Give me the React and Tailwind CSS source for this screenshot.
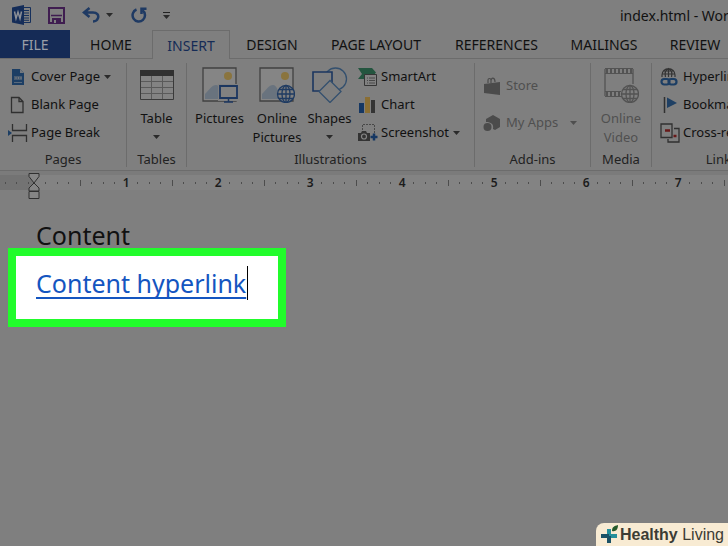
const tabs = [
  { name: 'HOME', width: 'w-[82px]' },
  { name: 'INSERT', width: 'w-[78px]', active: true },
  { name: 'DESIGN', width: 'w-[84px]' },
  { name: 'PAGE LAYOUT', width: 'w-[124px]' },
  { name: 'REFERENCES', width: 'w-[117px]' },
  { name: 'MAILINGS', width: 'w-[98px]' },
  { name: 'REVIEW', width: 'w-[84px]' },
];

const inches = [1, 2, 3, 4, 5, 6, 7, 8, 9, 10, 11, 12];

const Caret = ({ className = '' }) => (
  <svg className={`h-1 w-[7px] shrink-0 ${className}`} viewBox="0 0 7 4" fill="currentColor">
    <path d="M0 0h7L3.5 4z" />
  </svg>
);

const WordIcon = () => (
  <svg className="h-5 w-5" viewBox="0 0 20 20">
    <path d="M10 2.500h8.500v15H10z" fill="#7f7f7f" stroke="#16305c" />
    <path d="M11 5.500h6M11 8h6M11 10.500h6M11 13h6M11 15.300h6" stroke="#16305c" />
    <path d="M0 2.500 12 0v20L0 17.500z" fill="#142c58" />
    <path d="M2.500 6.500 4 13.500 6 7l2 6.500 1.500-7" fill="none" stroke="#8c8f96" strokeWidth="1.500" />
  </svg>
);

const SaveIcon = () => (
  <svg className="h-[17px] w-[17px]" viewBox="0 0 17 17">
    <path d="M1 1h15v15H1z" fill="none" stroke="#3f1d50" strokeWidth="2" />
    <path d="M3 8.500h11" stroke="#3f1d50" strokeWidth="1.500" />
    <path d="M4 11h9v5H4z" fill="#3f1d50" />
    <path d="M6 13h2v3H6z" fill="#7f7f7f" />
  </svg>
);

const UndoIcon = () => (
  <svg className="h-4 w-[18px]" viewBox="0 0 18 16" fill="none" stroke="#1f3a63" strokeWidth="2.500">
    <path d="M7.500 1 2 5.500l5.500 4.500M2.500 5.500H11c4 0 6 2.500 5 5.500-.6 2-2.500 3.500-5 3.500" />
  </svg>
);

const RedoIcon = () => (
  <svg className="h-4 w-4" viewBox="0 0 16 16" fill="none" stroke="#1f3a63" strokeWidth="2.500">
    <path d="M5.500 2.500a6.200 6.200 0 1 0 6 .8" />
    <path d="M15.500 1.700h-5v5.300" />
  </svg>
);

const CoverPageIcon = () => (
  <svg className="h-[18px] w-[18px]" viewBox="0 0 18 18">
    <path d="M4 1h8l4 4v12H4z" fill="#1c3e64" />
    <path d="M12 1v4h4" fill="#73787e" />
    <path d="M6 8.500h8v3H6z" fill="#73787e" />
    <path d="M6 10h8" stroke="#1c3e64" strokeDasharray="1.500 1" />
    <path d="M6 14.500h8" stroke="#5a6a7c" />
  </svg>
);

const BlankPageIcon = () => (
  <svg className="h-[18px] w-[18px]" viewBox="0 0 18 18" fill="none" stroke="#303030" strokeWidth="1.300">
    <path d="M3.500 1.500h7.500l4 4v11H3.500zM11 1.500v4h4" />
  </svg>
);

const PageBreakIcon = () => (
  <svg className="h-[18px] w-5" viewBox="0 0 20 18" fill="none" stroke="#303030" strokeWidth="1.300">
    <path d="M4.500 0v6.500h14V0M4.500 18v-6.500h14V18" />
    <path d="M0 6v6l4-3z" fill="#1c3e64" stroke="none" />
  </svg>
);

const TableIcon = () => (
  <svg className="h-8 w-[34px]" viewBox="0 0 34 32">
    <path d="M.5 1.500h33v29H.5z" fill="#838383" stroke="#3a3a3a" />
    <path d="M0 1h34v6H0z" fill="#303030" />
    <path d="M1 12.500h32M1 18.500h32M1 24.500h32M11.500 7v23M22.500 7v23" stroke="#5a5a5a" />
  </svg>
);

const Photo = () => (
  <>
    <path d="M1 1h33v33H1z" fill="#858585" stroke="#414141" strokeWidth="1.300" />
    <circle cx="26" cy="9" r="4" fill="#8a743e" />
    <path d="M3 32v-5c4-4 7-9 11-9s5 7 9 14z" fill="#69737e" />
  </>
);

const Globe = ({ stroke, fill = '#7f7f7f' }) => (
  <g fill="none" stroke={stroke} strokeWidth="1.300">
    <circle cx="27" cy="27" r="8.500" fill={fill} />
    <ellipse cx="27" cy="27" rx="4" ry="8.500" />
    <path d="M27 18.500v17M18.500 27h17M20 22.500h14M20 31.500h14" />
  </g>
);

const PicturesIcon = () => (
  <svg className="h-9 w-9" viewBox="0 0 36 36">
    <Photo />
    <path d="M16 17h20v17H16z" fill="#7f7f7f" />
    <path d="M18 19h17v12H18z" fill="#818181" stroke="#1b3660" strokeWidth="1.800" />
    <path d="M26.500 32v3M22 35h9" stroke="#1b3660" strokeWidth="1.500" />
  </svg>
);

const OnlinePicturesIcon = () => (
  <svg className="h-9 w-9" viewBox="0 0 36 36">
    <Photo />
    <Globe stroke="#1f3b62" />
  </svg>
);

const ShapesIcon = () => (
  <svg className="h-9 w-9" viewBox="0 0 36 36" strokeWidth="1.300">
    <circle cx="23.500" cy="12" r="11" fill="none" stroke="#34506e" />
    <path d="M1 5h19v19H1z" fill="#7f7f7f" stroke="#1b3660" strokeWidth="1.600" />
    <path d="m18 13.500 11 11-11 11-11-11z" fill="#7f7f7f" stroke="#34506e" />
  </svg>
);

const SmartArtIcon = () => (
  <svg className="h-[18px] w-5" viewBox="0 0 20 18">
    <path d="M0 0h14l4 4.500-2 2.500H6v4H0l4-5z" fill="#24553f" />
    <path d="M6.500 6.500h12v11h-12z" fill="#818181" stroke="#353535" />
    <path d="M9 10h1M11 10h6M9 12.500h1M11 12.500h6M9 15h1M11 15h6" stroke="#484848" />
  </svg>
);

const ChartIcon = () => (
  <svg className="h-[18px] w-[18px]" viewBox="0 0 18 18">
    <path d="M1 7h5v10H1z" fill="#153763" />
    <path d="M7 1h5v16H7z" fill="#8a6e33" />
    <path d="M13 4h4v13h-4z" fill="#343434" />
  </svg>
);

const ScreenshotIcon = () => (
  <svg className="h-[18px] w-5" viewBox="0 0 20 18">
    <path d="M4.500 6V.5h12V10" fill="none" stroke="#484848" strokeDasharray="2 1" />
    <path d="M0 9h3l1-2h4l1 2h3v8H0z" fill="#333" />
    <circle cx="6" cy="12.500" r="2.500" fill="none" stroke="#858585" strokeWidth="1.200" />
    <path d="M16 9.500v7M12.500 13h7" stroke="#153763" strokeWidth="2.500" />
  </svg>
);

const StoreIcon = () => (
  <svg className="h-[18px] w-[18px]" viewBox="0 0 18 18">
    <path d="M1 7l16-2v13L1 16z" fill="#4b4b4b" />
    <path d="M5 6V3c0-2 3-2 3 0v3M8 4c0-4 4-4 4 1" fill="none" stroke="#4b4b4b" strokeWidth="1.200" />
  </svg>
);

const AppsIcon = () => (
  <svg className="h-[18px] w-[18px]" viewBox="0 0 18 18" fill="#4b4b4b">
    <path d="M3 5l7-4 7 4v8l-5 3-2-1c1-5-2-7-7-7z" />
    <circle cx="4.500" cy="13" r="4" />
  </svg>
);

const VideoIcon = () => (
  <svg className="h-9 w-9" viewBox="0 0 36 36">
    <path d="M2 2v27M30 2v15" stroke="#535353" strokeWidth="1.300" />
    <path d="M2 1.500h28M2 29.500h17M2 6.500h28M2 24.500h16" stroke="#535353" />
    <path d="M3 4h27M3 27h15" stroke="#535353" strokeWidth="4" strokeDasharray="2 2" />
    <Globe stroke="#535353" />
  </svg>
);

const HyperlinkIcon = () => (
  <svg className="h-5 w-[18px]" viewBox="0 0 18 20" fill="none">
    <g stroke="#343434" strokeWidth="1.200">
      <path d="M2 10V8a6.500 6.500 0 0 1 13 0v2M2 7h13M3 4h11M8.500 1.500V10M5.500 10c-1-4 0-7 3-8.500 3 1.500 4 4.500 3 8.500" />
    </g>
    <g stroke="#1c3e64" strokeWidth="2.200">
      <rect x="1.500" y="12" width="8" height="5.500" rx="2.700" />
      <rect x="8.500" y="12" width="8" height="5.500" rx="2.700" />
    </g>
  </svg>
);

const BookmarkIcon = () => (
  <svg className="h-[18px] w-[18px]" viewBox="0 0 18 18">
    <path d="M4.500 1v16" stroke="#303030" strokeWidth="1.500" />
    <path d="M7 1.500 17 7 7 12z" fill="#1f4064" />
  </svg>
);

const CrossRefIcon = () => (
  <svg className="h-5 w-5" viewBox="0 0 20 20" fill="none" stroke="#303030" strokeWidth="1.300">
    <path d="M1 1h11v13.500H1zM14 5.500h5V19H8v-3" />
    <path d="M5 7.500h5M13.500 13h3" stroke="#681919" strokeWidth="2.500" />
  </svg>
);

const Group = ({ label, className = '', children }) => (
  <section className={`flex shrink-0 flex-col border-r border-[#6c6c6c] ${className}`}>
    <div className="flex h-[88px] shrink-0">{children}</div>
    <h2 className="text-center text-[13px] leading-4 text-[#222222]">{label}</h2>
  </section>
);

const SmallButton = ({ icon, label, caret, disabled }) => (
  <button
    type="button"
    disabled={disabled}
    className={`flex h-7 items-center whitespace-nowrap ${disabled ? 'text-[#4f4f4f]' : ''}`}
  >
    <span className="flex w-[23px] shrink-0 items-center">{icon}</span>
    {label}
    {caret && <Caret className={disabled ? 'ml-3' : 'ml-1 text-[#2b2b2b]'} />}
  </button>
);

const BigButton = ({ icon, lines, caret, disabled, className }) => (
  <button
    type="button"
    disabled={disabled}
    className={`flex flex-col items-center pt-1 leading-[19px] ${disabled ? 'text-[#505050]' : ''} ${className}`}
  >
    <span className="mb-[6px] flex h-9 items-center">{icon}</span>
    {lines.map(line => (
      <span key={line}>{line}</span>
    ))}
    {caret && <Caret className="mt-[7px] text-[#2b2b2b]" />}
  </button>
);

const Ruler = () => (
  <div className="flex h-[15px] overflow-hidden bg-[#838383] text-[#1c1c1c]">
    <div className="flex w-10 shrink-0">
      <div className="flex w-[34px] items-center justify-around bg-[#737373]">
        <i className="h-[2px] w-px bg-[#4d4d4d]" />
        <i className="h-[2px] w-px bg-[#4d4d4d]" />
        <i className="h-[2px] w-px bg-[#4d4d4d]" />
      </div>
    </div>
    {inches.map(inch => (
      <div key={inch} className="grid w-[92px] shrink-0 grid-cols-8 items-center justify-items-center">
        {[1, 2, 3, 4, 5, 6, 7].map(n => (
          <i key={n} className={`w-px bg-[#4d4d4d] ${n === 4 ? 'h-[6px]' : 'h-[2px]'}`} />
        ))}
        <span className="text-[12px] leading-[15px] font-semibold">{inch}</span>
      </div>
    ))}
  </div>
);

const App = () => {
  return (
    <div className="relative flex min-h-screen flex-col overflow-hidden bg-[#7f7f7f] font-['Noto_Sans',sans-serif] text-[13px] text-[#111111]">
      <header className="flex h-[30px] items-center pl-3">
        <WordIcon />
        <button type="button" aria-label="Save" className="ml-4"><SaveIcon /></button>
        <button type="button" aria-label="Undo" className="ml-[17px] flex items-center gap-[6px]">
          <UndoIcon />
          <Caret className="text-[#2b2b2b]" />
        </button>
        <button type="button" aria-label="Redo" className="ml-[18px]"><RedoIcon /></button>
        <button type="button" aria-label="Customize toolbar" className="ml-4 flex flex-col items-center gap-[2px]">
          <i className="h-px w-[7px] bg-[#222222]" />
          <Caret className="text-[#2b2b2b]" />
        </button>
        <h1 className="ml-auto w-[108px] overflow-hidden text-[14px] whitespace-nowrap">index.html - Word</h1>
      </header>

      <nav className="flex h-[29px] border-b border-[#6c6c6c] text-[14px]">
        <button type="button" className="w-[70px] shrink-0 bg-[#152b56] pt-px text-[#9a9fa8]">FILE</button>
        {tabs.map(tab => (
          <button
            key={tab.name}
            type="button"
            className={`shrink-0 pt-px whitespace-nowrap ${tab.width} ${
              tab.active ? '-mb-px border border-b-0 border-[#6c6c6c] bg-[#7f7f7f] text-[#152b56]' : ''
            }`}
          >
            {tab.name}
          </button>
        ))}
      </nav>

      <div className="flex h-[112px] overflow-hidden border-b border-[#6c6c6c] pt-1 pb-[3px]">
        <Group label="Pages" className="w-[127px]">
          <div className="flex flex-col pl-2">
            <SmallButton icon={<CoverPageIcon />} label="Cover Page" caret />
            <SmallButton icon={<BlankPageIcon />} label="Blank Page" />
            <SmallButton icon={<PageBreakIcon />} label="Page Break" />
          </div>
        </Group>
        <Group label="Tables" className="w-[60px]">
          <BigButton icon={<TableIcon />} lines={['Table']} caret className="w-full" />
        </Group>
        <Group label="Illustrations" className="w-[288px]">
          <BigButton icon={<PicturesIcon />} lines={['Pictures']} className="w-[65px]" />
          <BigButton icon={<OnlinePicturesIcon />} lines={['Online', 'Pictures']} className="w-[50px]" />
          <BigButton icon={<ShapesIcon />} lines={['Shapes']} caret className="w-[55px]" />
          <div className="flex flex-col pl-px">
            <SmallButton icon={<SmartArtIcon />} label="SmartArt" />
            <SmallButton icon={<ChartIcon />} label="Chart" />
            <SmallButton icon={<ScreenshotIcon />} label="Screenshot" caret />
          </div>
        </Group>
        <Group label="Add-ins" className="w-[116px]">
          <div className="flex flex-col gap-[9px] pt-[9px] pl-2">
            <SmallButton icon={<StoreIcon />} label="Store" disabled />
            <SmallButton icon={<AppsIcon />} label="My Apps" caret disabled />
          </div>
        </Group>
        <Group label="Media" className="w-[61px]">
          <BigButton icon={<VideoIcon />} lines={['Online', 'Video']} disabled className="w-full" />
        </Group>
        <Group label="Links" className="w-[140px]">
          <div className="flex flex-col pl-2">
            <SmallButton icon={<HyperlinkIcon />} label="Hyperlink" />
            <SmallButton icon={<BookmarkIcon />} label="Bookmark" />
            <SmallButton icon={<CrossRefIcon />} label="Cross-reference" />
          </div>
        </Group>
      </div>

      <div className="relative border-t-4 border-[#7b7b7b]">
        <Ruler />
        <svg className="absolute -top-1 left-7 h-7 w-3" viewBox="0 0 12 28" fill="#858585" stroke="#303030">
          <path d="M1 2.500h10v3L6 12 1 5.500zM6 12l5 5v3H1v-3zM1 20.500h10v7H1z" />
        </svg>
      </div>

      <main className="flex flex-1 flex-col items-start text-[25px] leading-[34px]">
        <p className="pt-7 pl-9">Content</p>
        <div className="-mt-1 ml-2 border-8 border-[#21fc2b] bg-white pt-[10px] pr-[30px] pb-[19px] pl-5">
          <a
            href="#hyperlink"
            className="border-r border-black pr-px text-[#1455c0] underline decoration-2 underline-offset-4 [text-decoration-skip-ink:none]"
          >
            Content hyperlink
          </a>
        </div>
      </main>

      <footer className="absolute right-0 bottom-0 flex h-[23px] items-center rounded-tl-lg bg-[#f8ebd3] pr-1 pl-1 font-['Liberation_Sans',sans-serif] text-[16px] text-[#3c3c34]">
        <svg className="h-5 w-5" viewBox="0 0 20 20">
          <path d="M9 4v14M1 11h16" stroke="#258f9b" strokeWidth="4" />
          <path d="M9 11v7M1 11h8" stroke="#1b5266" strokeWidth="4" />
          <path d="M12 6c0-4 2-5 6-6 0 4-2 7-6 6z" fill="#245a2a" />
        </svg>
        <span><b>Healthy</b> Living</span>
      </footer>
    </div>
  );
};

export default App;
